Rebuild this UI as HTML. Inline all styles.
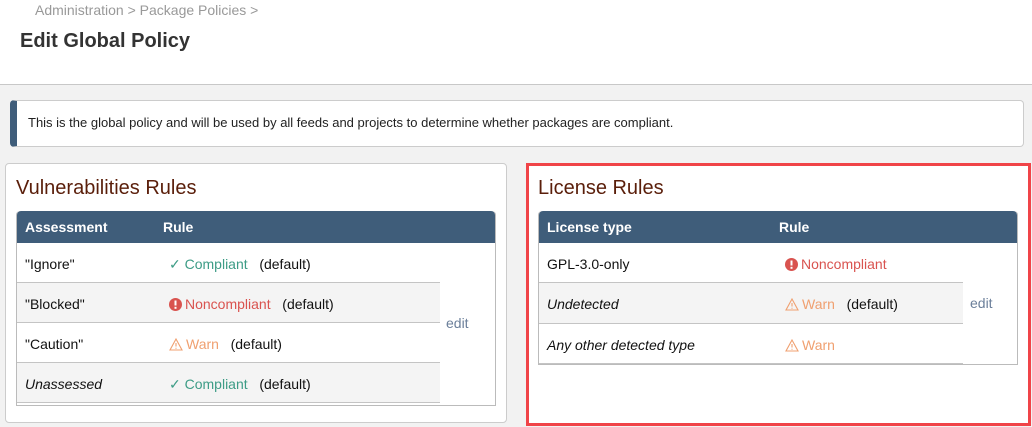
<!DOCTYPE html>
<html><head><meta charset="utf-8"><style>
*{box-sizing:border-box;margin:0;padding:0}
body{width:1032px;height:427px;overflow:hidden;background:#f2f2f2;font-family:"Liberation Sans",sans-serif;font-size:14px;color:#111;position:relative}
.abs{position:absolute}
.hdr{left:0;top:0;width:1032px;height:85px;background:#fff;border-bottom:1px solid #c8c8c8}
.info{left:10px;top:100px;width:1014px;height:47px;background:#fff;border:1px solid #ccc;border-left:7px solid #3f5d7a;border-radius:4px;padding:14px 0 0 11px;font-size:13px;color:#222}
.panel{background:#fff;border:1px solid #ccc;border-radius:4px}
h2{font-weight:normal;font-size:20px;color:#5a1e0a;position:absolute}
.th{background:#3f5d7a;color:#fff;font-weight:bold;height:32px;border-radius:4px 4px 0 0;font-size:14px}
.th span{position:absolute;top:8px}
.row{position:absolute;height:40px;border-bottom:1px solid #c4c4c4}
.row span{position:absolute;top:13px}
.g{background:#f4f4f4}
.ok{color:#3d9c86}.bad{color:#d9534f}.warn{color:#f0a070}
b{font-weight:normal}
.edit{color:#6b7f9a}
svg{vertical-align:-2px;margin-right:3px}
</style></head><body>
<div class="abs hdr"></div>
<div class="abs" style="left:35px;top:2px;font-size:14px;color:#999">Administration &gt; Package Policies &gt;</div>
<div class="abs" style="left:20px;top:30px;font-size:20px;font-weight:bold;color:#333">Edit Global Policy</div>
<div class="abs info">This is the global policy and will be used by all feeds and projects to determine whether packages are compliant.</div>

<div class="abs panel" style="left:5px;top:163px;width:502px;height:260px"></div>
<h2 style="left:16px;top:177px">Vulnerabilities Rules</h2>
<div class="abs" style="left:16px;top:211px;width:480px;height:195px;border:1px solid #bbb;border-top:none;border-radius:4px 4px 0 0;background:#fff">
 <div class="th" style="position:relative"><span style="left:8px">Assessment</span><span style="left:146px">Rule</span></div>
 <div class="row" style="left:0;top:32px;width:423px"><span style="left:8px">"Ignore"</span><span style="left:152px"><b class="ok">✓ Compliant</b>&nbsp;&nbsp;&nbsp;(default)</span></div>
 <div class="row g" style="left:0;top:72px;width:423px"><span style="left:8px">"Blocked"</span><span style="left:152px"><svg width="13" height="13" viewBox="0 0 13 13"><circle cx="6.5" cy="6.5" r="6.5" fill="#d9534f"/><rect x="5.5" y="2.5" width="2" height="5" fill="#fff"/><rect x="5.5" y="8.8" width="2" height="2" fill="#fff"/></svg><b class="bad">Noncompliant</b>&nbsp;&nbsp;&nbsp;(default)</span></div>
 <div class="row" style="left:0;top:112px;width:423px"><span style="left:152px"></span><span style="left:8px">"Caution"</span><span style="left:152px"><svg width="14" height="13" viewBox="0 0 14 13"><path d="M7 1 L13 12 H1 Z" fill="none" stroke="#f0a070" stroke-width="1.1"/><path d="M7 5 V8.5 M7 9.8 V10.8" stroke="#f0a070" stroke-width="1.1"/></svg><b class="warn">Warn</b>&nbsp;&nbsp;&nbsp;(default)</span></div>
 <div class="row g" style="left:0;top:152px;width:423px"><span style="left:8px;font-style:italic">Unassessed</span><span style="left:152px"><b class="ok">✓ Compliant</b>&nbsp;&nbsp;&nbsp;(default)</span></div>
 <div class="abs edit" style="left:429px;top:104px">edit</div>
</div>

<div class="abs" style="left:526px;top:163px;width:505px;height:263px;border:3px solid #f04448;background:#fff"></div>
<h2 style="left:538px;top:177px">License Rules</h2>
<div class="abs" style="left:538px;top:211px;width:480px;height:154px;border:1px solid #bbb;border-top:none;border-radius:4px 4px 0 0;background:#fff">
 <div class="th" style="position:relative"><span style="left:8px">License type</span><span style="left:240px">Rule</span></div>
 <div class="row" style="left:0;top:32px;width:424px"><span style="left:8px">GPL-3.0-only</span><span style="left:246px"><svg width="13" height="13" viewBox="0 0 13 13"><circle cx="6.5" cy="6.5" r="6.5" fill="#d9534f"/><rect x="5.5" y="2.5" width="2" height="5" fill="#fff"/><rect x="5.5" y="8.8" width="2" height="2" fill="#fff"/></svg><b class="bad">Noncompliant</b></span></div>
 <div class="row g" style="left:0;top:72px;width:424px;height:41px"><span style="left:8px;font-style:italic">Undetected</span><span style="left:246px"><svg width="14" height="13" viewBox="0 0 14 13"><path d="M7 1 L13 12 H1 Z" fill="none" stroke="#f0a070" stroke-width="1.1"/><path d="M7 5 V8.5 M7 9.8 V10.8" stroke="#f0a070" stroke-width="1.1"/></svg><b class="warn">Warn</b>&nbsp;&nbsp;&nbsp;(default)</span></div>
 <div class="row" style="left:0;top:113px;width:424px"><span style="left:8px;font-style:italic">Any other detected type</span><span style="left:246px"><svg width="14" height="13" viewBox="0 0 14 13"><path d="M7 1 L13 12 H1 Z" fill="none" stroke="#f0a070" stroke-width="1.1"/><path d="M7 5 V8.5 M7 9.8 V10.8" stroke="#f0a070" stroke-width="1.1"/></svg><b class="warn">Warn</b></span></div>
 <div class="abs edit" style="left:431px;top:84px">edit</div>
</div>
</body></html>
